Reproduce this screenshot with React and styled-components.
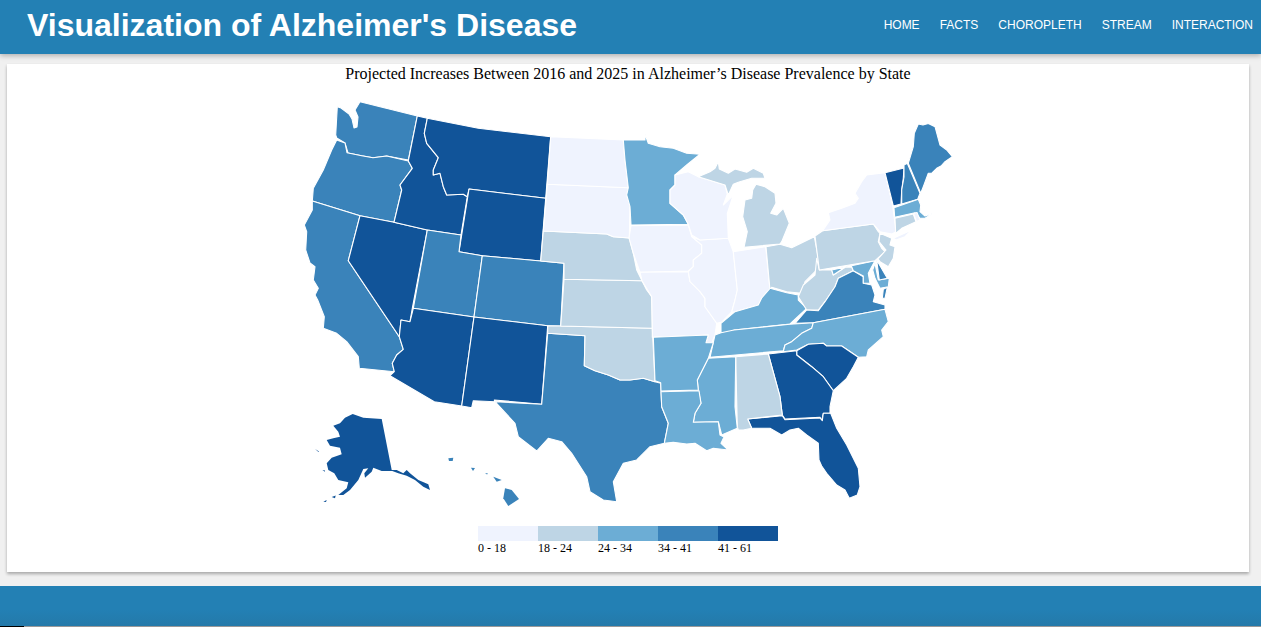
import React from 'react';
import styled, { createGlobalStyle } from 'styled-components';

const tones = ['#eff3fe', '#bed5e5', '#6cadd5', '#3a83ba', '#115499'];
const ranges = ['0 - 18', '18 - 24', '24 - 34', '34 - 41', '41 - 61'];
const links = ['HOME', 'FACTS', 'CHOROPLETH', 'STREAM', 'INTERACTION'];

// screen-space outlines traced per state: [name, colour bin, points]
const states = [
  ['WA', 3, '360,101.7 417.3,116 408.3,160 386.7,156 373,157.7 361.7,155.7 348,153 345,143 336.7,138 335.7,135 337.3,106.7 341,108 349,114 352,119 354,128 357,127 358,117 355,110'],
  ['OR', 3, '336.7,140 345,143 347,152.7 361.7,155.7 373,157.7 386.7,156 408.3,161 412.3,168.3 400,185 401.7,190 394,222.3 360,215.7 312.3,201 313.3,188.3 323.3,170 331.7,150'],
  ['CA', 3, '312.3,201 360,215.7 348.3,260.7 399.3,336.7 403.3,349.3 396.7,355 392.3,363.3 394.3,371.7 359.3,368.3 358.3,356.7 346.7,341.7 336.7,333.3 323.3,328.3 324.3,316.7 317.7,300 315,295 318.3,288.3 313.3,280 315,266.7 310,263 305.7,250 306.7,231.7 304.3,225 312.3,210'],
  ['NV', 4, '360,215.7 394,222.3 427.3,230 412.3,308.3 410,321.7 401,320 399.3,336.7 348.3,260.7'],
  ['ID', 4, '417.3,116 427.3,118.3 424.3,133.3 426.7,143.3 438.3,157.7 433.3,170 433.3,175 440,173.3 443.3,186.7 446.7,195 463.3,194.3 467.3,196.7 461,235 427.3,230 394,222.3 401.7,190 400,185 412.3,168.3 408.3,161'],
  ['MT', 4, '427.3,118.3 478.3,128.3 550.7,136.7 545.7,198.3 469,189 467.3,196.7 463.3,194.3 446.7,195 443.3,186.7 440,173.3 433.3,175 433.3,170 438.3,157.7 426.7,143.3 424.3,133.3'],
  ['WY', 4, '469,189 545.7,198.3 540.7,261 482.3,255.7 459,251.7'],
  ['UT', 3, '427.3,230 461,235 459,251.7 482.3,255.7 474,317 413.3,308.3'],
  ['CO', 3, '482.3,255.7 540.7,261 564,263.3 560.7,326 547.7,325.7 474,317'],
  ['AZ', 4, '413.3,308.3 474,317 461.7,406 434.3,401.7 390,375.7 394.3,371.7 392.3,363.3 396.7,355 403.3,349.3 399.3,336.7 401,320 410,321.7'],
  ['NM', 4, '474,317 547.7,325.7 541.7,404.3 494.3,400 495,401.7 473.3,400.7 471.7,407.7 461.7,406'],
  ['TX', 3, '547.7,333.3 585,335.7 584.3,365.7 595,370.7 608.3,375 620,380 630,380 643.3,378.3 655,381.7 660.7,383.3 661.7,406.7 668.3,423.3 664.3,443.3 650,446.7 636.7,460 623.3,463.3 613.3,481.7 616.7,501.7 603.3,500 590,491.7 586.7,476.7 571.7,453.3 561.7,441.7 548.3,438.3 536.7,451 518.3,436.7 515,423.3 495,401.7 541.7,404.3'],
  ['OK', 1, '547.7,325.7 560.7,326 652.3,328.3 655,381.7 643.3,378.3 630,380 620,380 608.3,375 595,370.7 584.3,365.7 585,335.7 547.7,333.3'],
  ['KS', 1, '564,279.3 642,280.7 646.7,290 651.7,296.7 652.3,328.3 560.7,326'],
  ['NE', 1, '543.3,231 606.7,234 613.3,236.7 629.3,238 633.3,253.3 636.7,270 642,280.7 564,279.3 564,263.3 540.7,261'],
  ['SD', 0, '547.3,184.3 628.3,187.7 627.7,195 630,205 629.3,238 613.3,236.7 606.7,234 543.3,231'],
  ['ND', 0, '550.7,136.7 623.3,140 625,160 628.3,187.7 547.3,184.3'],
  ['MN', 2, '623.3,140 645,140 645,134.3 648.3,143.3 660,146.7 673.3,148.3 686.7,153.3 700,154.3 686.7,165 675,175 675,185 670,190 670,203.3 683.3,215 688.3,224.3 631,225 630,206.7 626.7,195 628.3,187.7 625,160'],
  ['IA', 0, '631,225.7 688.3,225 691.7,236.7 701.7,245 701.7,253.3 693.3,260 693.3,266.7 688.3,271 640,272.3 633.3,253.3 629,238'],
  ['MO', 0, '640,272.3 688.3,271.7 690,281.7 700,291.7 705,298.3 705,306.7 716.7,323.3 715,335 711.7,343.3 706,342.7 708.3,335 652.3,337.3 652.3,328.3 651.7,296.7 642,280.7'],
  ['IL', 0, '700,240 728.3,238.3 733.3,251.7 737.3,290 735,300 731.7,312 722,322 716.7,323.3 705,306.7 705,298.3 700,291.7 690,281.7 688.3,271.7 693.3,266.7 693.3,260 701.7,253.3 701.7,245 691.7,236.7'],
  ['WI', 0, '675,175 688.3,171.7 698.3,176.7 725,185 727.3,194.3 723.3,205 733.3,195 727.3,213.3 728.3,238.3 700,240 691.7,235 688.3,224.3 683.3,215 670,203.3 670,190 675,185'],
  ['MI-U', 1, '698.3,176.7 710,171.7 715,168.3 718.3,161.7 719.3,169 728.3,173.3 735,169 746.7,172.3 753.3,168.3 763.3,173.3 765,178.3 751.7,178.3 738.3,182.3 733.3,184.3 728.3,195 725,185'],
  ['MI-L', 1, '756,184.3 765,186.7 775,193.3 776,203.3 770.7,213.3 776.7,215 783.3,208.3 789.3,223.3 781.7,241.7 780,244 744,247.3 747.3,231.7 742.7,216.7 745,200 751.7,198.3 752.7,190'],
  ['IN', 0, '733.3,251.7 765.7,246.7 770,290 762,298 758.3,305 735,311.7 731.7,312 735,300 737.3,290'],
  ['OH', 1, '766,246.7 780,244.3 791.7,247.7 814.3,236.7 819,261.7 815,271.7 805,281.7 801.7,293.3 786.7,291.7 771.7,287.3 770,290'],
  ['KY', 2, '770,288.3 786.7,292.7 798.3,295 798.3,300 806.7,308.3 790,324 734,330 733.3,332.3 721,332.7 721,323.3 735,311.7 758.3,305 761.7,298'],
  ['WV', 1, '816.7,258.3 819.3,270 831.7,270 833.3,275 845,267.3 851.7,266.7 853.3,270.7 838.3,278.3 835,286.7 825,301.7 818.3,310 806.7,310 798.3,296.7 803.3,285 815,275'],
  ['VA', 3, '795,323.3 806.7,310 818.3,310.7 825,301.7 835,286.7 838.3,278.3 853.3,270.7 863.3,276.7 863.3,283.3 871.7,285 875,295 873.3,301.7 885,305 885,309.3 813.3,322.7'],
  ['VA-E', 3, '883.3,289.3 887.3,287.3 885,298.3 882.3,298.3'],
  ['MD-W', 2, '831.7,270 875,260.7 871.7,266.7 868.3,273.3 870,283.3 863.3,283.3 863.3,276 853.3,270.7 851.7,266.7 845,267.3 833.3,275'],
  ['MD-E', 2, '875,263.3 878.3,280 889.3,278.3 888.3,286.7 880,288.3 875,278.3 872.7,270'],
  ['DE', 3, '876.7,260 887.3,278.3 879.3,280'],
  ['PA', 1, '815,236 822.7,230.7 873.3,224 878.3,231.7 880,233.3 878.3,241.7 881.7,248.3 885,251.7 875,260.7 819.3,270'],
  ['NJ', 1, '880,233.3 891.7,238.3 890,245 895,246.7 893.3,258.3 888.3,266.7 880,261.7 878,259 886,250 879,241.7'],
  ['NY', 0, '822.7,230.7 830,220 828.3,212.7 841.7,208.3 855,203.3 858.3,198.3 855,193.3 861.7,181.7 866.7,175 885,172.7 892.7,206 896,231.7 892,234 880,231.7 873.3,224'],
  ['NY-LI', 0, '893.3,238.3 911.7,230 905,236.7 896,240'],
  ['VT', 4, '885,172.7 904,168 903.3,178.3 901.7,190 901,204 893.3,206'],
  ['NH', 3, '904,165 907.3,163.3 920,193.3 917.7,199.3 901.7,204 901.7,190 904,177'],
  ['ME', 3, '908.3,163.3 913.3,146.7 914.3,133.3 918.3,124 923,125 928.3,123.5 935,126.7 940,145 946.7,150 952.3,156.7 945,161.7 941,166 936.7,168.3 932,173 928.3,173.3 923.3,186.7 920.7,193.3'],
  ['MA', 2, '894,207.7 918.3,199.3 920.7,205 920,211.7 925,216 933.3,213.3 925,218.3 920,218.3 915,212.7 894.7,217.3'],
  ['CT', 1, '895,218.3 913.3,214 916,221.7 901.7,228.3 895.7,233.3'],
  ['RI', 0, '913.5,213.5 917,212.5 920,220 916.5,221.5'],
  ['TN', 2, '734,330 790,324.3 813.3,322.7 811.7,328.3 801.7,333.3 791.7,341.7 785,345 783.3,350.7 710,357.3 715,335 721,332.7'],
  ['NC', 2, '813.3,322.7 885,309.3 888.3,321.7 881.7,330 883.3,336.7 868.3,350 866.7,356.7 858.3,357.3 841.7,346 826.7,346 823.3,343.3 808.3,344.3 796.7,350 783.3,351.7 785,345 791.7,341.7 801.7,333.3 811.7,328.3'],
  ['SC', 4, '796.7,350.7 808.3,344.3 823.3,343.3 826.7,346 841.7,346 858.3,357.3 853.3,366.7 846.7,378.3 833.3,390.7 823.3,376.7 811.7,366.7 796.7,355'],
  ['GA', 4, '768.3,354 796.7,350.7 796.7,355 811.7,366.7 823.3,376.7 833.3,390.7 830,406.7 830,413.3 823.3,413.3 821.7,420.7 820,417.3 785,419 782.3,415 780,396.7'],
  ['FL', 4, '747.7,419 782.3,415.7 785,419.7 820,418 822.3,420.7 823.3,413.3 830.7,413.3 836.7,428.3 846.7,445 858.3,468.3 860,486.7 857.3,495 849.3,498.3 845,490 836.7,485 826.7,473.3 821.7,466 819,460 818.3,443.3 806.7,435 798.3,428.3 790,430 781.7,435 770,428.3 751.7,428.3'],
  ['AL', 1, '735.7,356.7 768.3,354 780,396.7 782.3,415 747.7,419 751.7,428.3 743.3,430 738.3,430 737.3,426.7'],
  ['MS', 2, '708.3,358.3 735.7,356.7 735,406.7 737.3,428.3 721.7,435 718.3,421.7 693.3,422.3 695,413.3 701,403.3 698.3,390 697.3,380'],
  ['AR', 2, '653.3,337.3 708.3,335 706,342.7 713.3,342.7 708.3,358.3 697.3,380 698.3,390 661,391 660.7,382.7 655,380.7'],
  ['LA', 2, '661,391.7 699,390.7 701,403.3 695,413.3 693.3,422.3 718.3,421.7 720,435 724,437 721,443.3 728.3,450 713.3,448.3 706.7,450.7 695,443.3 686.7,444 673.3,442.3 664.3,443.3 668.3,423.3 661.7,406.7'],
];

// Alaska and Hawaii have no borders to draw
const islands = [
  [4, '352.7,414 363.3,417.7 381.7,419 391.7,470 396.7,470 403.3,473.3 406.7,470 410,473.3 418.3,480 428.3,484.3 430,490 423.3,486.7 415,480 406.7,475.7 398.3,473.3 392.3,471 381.7,471 373.3,467.7 371.7,471.7 365,477.7 364.3,473.3 368.3,468.3 363.3,469 358.3,480 350,490 343.3,495 338.3,495 346.7,488.3 348.3,482.3 338.3,480 334.3,473.3 328.3,470 326.7,463.3 331.7,457.7 341.7,454.3 340,447.7 330,445.7 326.7,440 333.3,438.3 340,436.7 338.3,431.7 333.3,425.7 340,423.3 345,417.7'],
  [4, '322.3,470 325,470.5 325,471.7'],
  [4, '331.7,497 335.7,495.5 335,498.3'],
  [4, '323.3,501.7 326.7,500 326,502'],
  [4, '315,449 319,451.5 318.5,452'],
  [3, '505,488.3 511.7,490 519,499 508.3,506 503.3,498.3'],
  [3, '493.3,476.7 501.7,480 496.7,481.7'],
  [3, '471,467.7 475,468 473,471'],
  [3, '448.3,458.3 453.3,457.7 452.7,461 449,461'],
  [3, '485,473 488,473.5 487,474.5'],
];

const GlobalStyle = createGlobalStyle`
  html, body {
    margin: 0;
    background: #f0f0f0;
  }
`;

const Page = styled.div`
  display: flex;
  flex-direction: column;
  height: 627px;
  overflow: hidden;
`;

const Header = styled.header`
  display: flex;
  justify-content: space-between;
  align-items: center;
  flex: none;
  height: 50px;
  padding: 0 8px 4px 27px;
  background: #2380b4;
  box-shadow: 0 2px 5px rgba(0, 0, 0, 0.26);
`;

const Title = styled.h1`
  margin: 0;
  color: #fff;
  font: bold 32px/50px 'Liberation Sans', Arial, sans-serif;
`;

const Nav = styled.nav`
  display: flex;
  gap: 20px;
`;

const NavLink = styled.a`
  color: #fff;
  font: 12px/1 'Liberation Sans', Arial, sans-serif;
`;

const Card = styled.main`
  flex: none;
  height: 508px;
  margin: 10px 12px 0 7px;
  background: #fff;
  box-shadow: 0 2px 3px rgba(0, 0, 0, 0.3);
`;

const Heading = styled.h2`
  margin: 0 0 6px;
  text-align: center;
  color: #000;
  font: 16px/20px 'Liberation Serif', 'Times New Roman', serif;
`;

const MapFrame = styled.svg`
  display: block;
  width: 664px;
  height: 430px;
  margin: 0 auto;
`;

const StateShape = styled.polygon`
  fill: ${p => tones[p.$bin]};
  stroke: #fff;
  stroke-width: 1.1;
  stroke-linejoin: round;
`;

const IslandShape = styled.polygon`
  fill: ${p => tones[p.$bin]};
`;

const Legend = styled.div`
  display: flex;
  justify-content: center;
  margin-top: 6px;
`;

const LegendItem = styled.div`
  width: 60px;
  color: #000;
  font: 12px/14px 'Liberation Serif', 'Times New Roman', serif;
`;

const Swatch = styled.div`
  height: 15px;
  background: ${p => tones[p.$bin]};
`;

const Footer = styled.footer`
  flex: none;
  height: 40px;
  margin-top: 14px;
  background: linear-gradient(#2380b4 60%, #2479a9);
`;

const BottomEdge = styled.div`
  flex: none;
  height: 1px;
  background: linear-gradient(to right, #000 24px, #999 24px);
`;

export default function App() {
  return (
    <Page>
      <GlobalStyle />
      <Header>
        <Title>Visualization of Alzheimer's Disease</Title>
        <Nav>
          {links.map(l => <NavLink key={l}>{l}</NavLink>)}
        </Nav>
      </Header>
      <Card>
        <Heading>Projected Increases Between 2016 and 2025 in Alzheimer’s Disease Prevalence by State</Heading>
        <MapFrame viewBox="296 90 664 430">
          {states.map(([name, bin, points]) => (
            <StateShape key={name} $bin={bin} points={points} />
          ))}
          {islands.map(([bin, points], i) => (
            <IslandShape key={i} $bin={bin} points={points} />
          ))}
        </MapFrame>
        <Legend>
          {ranges.map((r, i) => (
            <LegendItem key={r}>
              <Swatch $bin={i} />
              {r}
            </LegendItem>
          ))}
        </Legend>
      </Card>
      <Footer />
      <BottomEdge />
    </Page>
  );
}
